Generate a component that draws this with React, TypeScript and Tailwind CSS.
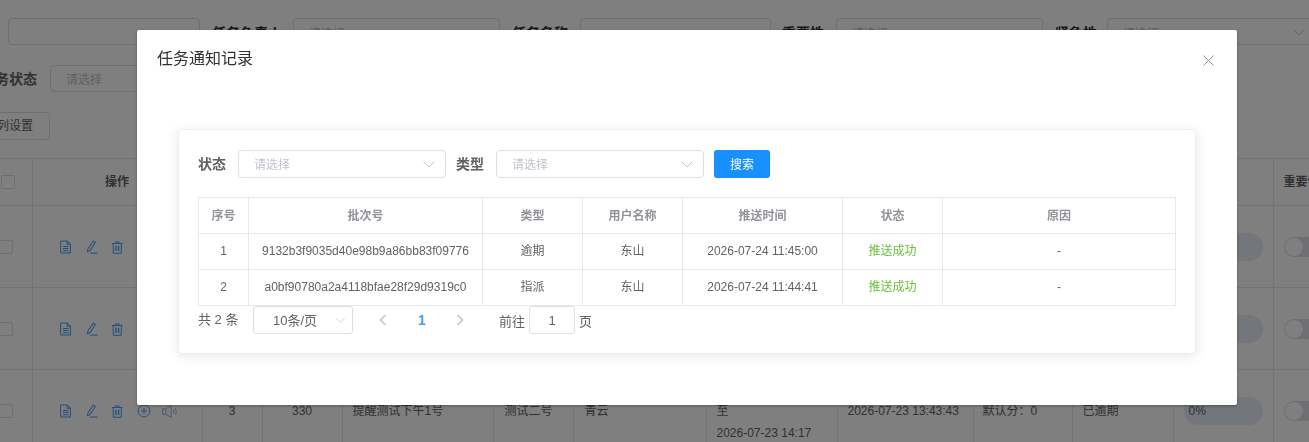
import React from "react";

const DocIcon = () => (
  <svg width="13.500" height="14" viewBox="0 0 14 15" fill="none" stroke="currentColor" strokeWidth="1.100">
    <path d="M2.500 1h6l3.500 3.500V14H2.500a1 1 0 0 1-1-1V2a1 1 0 0 1 1-1z" />
    <path d="M8.500 1v3.500H12M4 7h6M4 9.200h6M4 11.400h6" />
  </svg>
);
const EditIcon = () => (
  <svg width="15" height="14" viewBox="0 0 14 15" fill="none" stroke="currentColor" strokeWidth="1.100">
    <path d="M8.800 1.200l2.300 1.500-5.600 8.600-2.800 1.200.4-3z" />
    <path d="M5.500 14h8" />
  </svg>
);
const TrashIcon = () => (
  <svg width="12.500" height="15" viewBox="0 0 14 15" fill="none" stroke="currentColor" strokeWidth="1.100">
    <path d="M1 3h12M5 3V1.200h4V3M2.500 3v11h9V3" />
    <path d="M5.500 5.500v6M8.500 5.500v6" strokeWidth="1.500" />
  </svg>
);
const PlusIcon = () => (
  <svg width="14" height="14" viewBox="0 0 14 14" fill="none" stroke="currentColor" strokeWidth="1">
    <circle cx="7" cy="7" r="6" />
    <path d="M7 4v6M4 7h6" />
  </svg>
);
const SpeakerIcon = () => (
  <svg width="17" height="15" viewBox="0 0 15 14" fill="none" stroke="currentColor" strokeWidth="0.900">
    <path d="M1 4.500h3V9.500H1zM4 4.500L9 1.500v11L4 9.500" />
    <path d="M11 5c.6 1.200.6 2.800 0 4M13 4c.9 1.900.9 4.100 0 6" />
  </svg>
);
const Chevron = ({ className = "" }: { className?: string }) => (
  <svg className={className} width="12" height="7" viewBox="0 0 12 7" fill="none" stroke="currentColor" strokeWidth="1">
    <path d="M0.500 0.500L6 6l5.500-5.500" />
  </svg>
);

const colWidths = [32, 170, 60, 80, 151, 80, 133, 131, 136, 99, 101, 100, 100];

const IconSlot = ({ children }: { children: React.ReactNode }) => (
  <span className="w-[26px] flex justify-center shrink-0">{children}</span>
);

const Actions = () => (
  <div className="flex items-center pl-[20px] pt-[1px] text-[#409eff]">
    <IconSlot><DocIcon /></IconSlot>
    <IconSlot><EditIcon /></IconSlot>
    <IconSlot><TrashIcon /></IconSlot>
    <IconSlot><PlusIcon /></IconSlot>
    <IconSlot><span className="text-[#8fb4e0]"><SpeakerIcon /></span></IconSlot>
  </div>
);

const BgRow = ({ n, full }: { n: number; full: boolean }) => (
  <tr className="h-[82px] border-b border-[#e4e7ed]">
    <td className="border-r border-[#e4e7ed]">
      <div className="w-[14px] h-[14px] border border-[#dcdfe6] rounded-[2px] -ml-px" />
    </td>
    <td className="border-r border-[#e4e7ed]"><Actions /></td>
    <td className="border-r border-[#e4e7ed] text-center">{full ? n : ""}</td>
    <td className="border-r border-[#e4e7ed] text-center">{full ? "330" : ""}</td>
    <td className="border-r border-[#e4e7ed] pl-[10px]">{full ? "提醒测试下午1号" : ""}</td>
    <td className="border-r border-[#e4e7ed] pl-[11px]">{full ? "测试二号" : ""}</td>
    <td className="border-r border-[#e4e7ed] pl-[11px]">{full ? "青云" : ""}</td>
    <td className="border-r border-[#e4e7ed] pl-[10px] leading-[22px]">
      {full && (
        <>
          <div>2026-07-23 14:00</div>
          <div>至</div>
          <div>2026-07-23 14:17</div>
        </>
      )}
    </td>
    <td className="border-r border-[#e4e7ed] pl-[10px]">{full ? "2026-07-23 13:43:43" : ""}</td>
    <td className="border-r border-[#e4e7ed] pl-[9px]">{full ? "默认分：0" : ""}</td>
    <td className="border-r border-[#e4e7ed] pl-[10px]">{full ? "已逾期" : ""}</td>
    <td className="border-r border-[#e4e7ed] pl-[10px]">
      <div className="w-[79px] h-[28px] rounded-full bg-[#e6ecf4] flex items-center pl-[5px]">{full ? "0%" : ""}</div>
    </td>
    <td className="pl-[10px]">
      <div className="w-[46px] h-[20px] rounded-full bg-[#dcdfe6] p-px">
        <div className="w-[18px] h-[18px] rounded-full bg-white" />
      </div>
    </td>
  </tr>
);

const Field = ({ label, left, width, placeholder = "请选择" }: { label: string; left: number; width: number; placeholder?: string }) => (
  <div className="flex items-center shrink-0" style={{ width: left + width }}>
    <span className="font-bold text-[14px] text-[#303133] whitespace-nowrap pt-[4px]" style={{ width: left }}>{label}</span>
    <div className="h-[27px] border border-[#dcdfe6] rounded-[4px] pl-[15px] pt-[4px] flex items-center text-[12px] text-[#c0c4cc]" style={{ width }}>
      {placeholder}
    </div>
  </div>
);

const Select = () => (
  <div className="h-[28px] w-[208px] border border-[#dcdfe6] rounded-[4px] pl-[15px] pr-[10px] flex items-center justify-between text-[12px] text-[#c0c4cc]">
    <span className="pt-[1px]">请选择</span>
    <Chevron className="text-[#c0c4cc]" />
  </div>
);

const headers = ["序号", "批次号", "类型", "用户名称", "推送时间", "状态", "原因"];
const widths = [50, 234, 100, 100, 160, 100, 233];
const rows = [
  ["1", "9132b3f9035d40e98b9a86bb83f09776", "逾期", "东山", "2026-07-24 11:45:00", "推送成功", "-"],
  ["2", "a0bf90780a2a4118bfae28f29d9319c0", "指派", "东山", "2026-07-24 11:44:41", "推送成功", "-"],
];

export default function App() {
  return (
    <div className="relative w-[1309px] h-[442px] overflow-hidden bg-white text-[12px] text-[#606266] font-['Liberation_Sans','Noto_Sans_CJK_SC',sans-serif]">
      <div className="pt-[18px]">
        <div className="flex items-center pl-[8px] h-[27px]">
          <div className="w-[192px] h-[27px] border border-[#dcdfe6] rounded-[4px] shrink-0" />
          <div className="ml-[12px]"><Field label="任务负责人" left={81} width={207} /></div>
          <div className="ml-[12px]"><Field label="任务名称" left={68} width={191} placeholder="" /></div>
          <div className="ml-[11px]"><Field label="重要性" left={54} width={207} /></div>
          <div className="ml-[12px] relative"><Field label="紧急性" left={52} width={230} />
            <Chevron className="absolute right-[32px] top-[11px] text-[#c0c4cc]" />
          </div>
        </div>
        <div className="flex items-center mt-[20px] h-[27px] -ml-[19px]">
          <span className="font-bold text-[14px] text-[#606266] w-[69px] shrink-0 pt-[2px]">任务状态</span>
          <div className="w-[192px] h-[27px] border border-[#dcdfe6] rounded-[4px] pl-[15px] pt-[2px] flex items-center text-[#c0c4cc]">请选择</div>
        </div>
        <div className="mt-[20px] -ml-[20px] w-[70px] h-[28px] border border-[#dcdfe6] rounded-[4px] flex items-center justify-end pr-[16px] text-[#606266]">列设置</div>
        <table className="mt-[18px] table-fixed border-collapse w-[1373px]">
          <colgroup>
            {colWidths.map((w, i) => <col key={i} style={{ width: w }} />)}
          </colgroup>
          <thead>
            <tr className="h-[47px] border-y border-[#e4e7ed] font-bold text-[#606266]">
              <th className="border-r border-[#e4e7ed]">
                <div className="w-[14px] h-[14px] ml-[1px] border border-[#dcdfe6] rounded-[2px]" />
              </th>
              <th className="border-r border-[#e4e7ed]">操作</th>
              <th className="border-r border-[#e4e7ed]" />
              <th className="border-r border-[#e4e7ed]" />
              <th className="border-r border-[#e4e7ed]" />
              <th className="border-r border-[#e4e7ed]" />
              <th className="border-r border-[#e4e7ed]" />
              <th className="border-r border-[#e4e7ed]" />
              <th className="border-r border-[#e4e7ed]" />
              <th className="border-r border-[#e4e7ed]" />
              <th className="border-r border-[#e4e7ed]" />
              <th className="border-r border-[#e4e7ed]" />
              <th className="text-left pl-[10px] whitespace-nowrap">重要性</th>
            </tr>
          </thead>
          <tbody>
            <BgRow n={1} full={false} />
            <BgRow n={2} full={false} />
            <BgRow n={3} full />
          </tbody>
        </table>
      </div>

      <div className="fixed inset-0 bg-black/50" />

      <div className="fixed left-[137px] top-[30px] w-[1100px] h-[375px] bg-white rounded-[2px] shadow-[0_1px_3px_rgba(0,0,0,0.3)]">
        <div className="flex items-start justify-between pl-[20px] pr-[23px] pt-[17px] h-[60px]">
          <span className="text-[16px] leading-[24px] text-[#303133]">任务通知记录</span>
          <svg className="mt-[8px]" width="11" height="11" viewBox="0 0 11 11" stroke="#909399" strokeWidth="1" fill="none">
            <path d="M0.500 0.500l10 10M10.500 0.500l-10 10" />
          </svg>
        </div>
        <div className="mt-[39px] ml-[41px] w-[1018px] h-[225px] bg-white rounded-[4px] border border-[#ebeef5] shadow-[0_2px_12px_rgba(0,0,0,0.1)] pt-[20px] pl-[19px]">
          <div className="flex items-center h-[28px]">
            <span className="text-[14px] font-bold w-[40px] shrink-0">状态</span>
            <Select />
            <span className="text-[14px] font-bold ml-[10px] w-[40px] shrink-0">类型</span>
            <Select />
            <button className="ml-[10px] w-[56px] h-[28px] pt-[2px] rounded-[3px] bg-[#1890ff] text-white text-[12px]">搜索</button>
          </div>
          <table className="mt-[19px] table-fixed border-collapse w-[977px] text-center">
            <colgroup>
              {widths.map((w, i) => <col key={i} style={{ width: w }} />)}
            </colgroup>
            <thead>
              <tr className="h-[36px]">
                {headers.map((h) => (
                  <th key={h} className="border border-[#e6e9ef] font-bold text-[#909399]">{h}</th>
                ))}
              </tr>
            </thead>
            <tbody>
              {rows.map((r) => (
                <tr key={r[0]} className="h-[36px]">
                  {r.map((c, i) => (
                    <td key={i} className={`border border-[#e6e9ef] pb-[2px] ${i === 5 ? "text-[#67c23a]" : ""}`}>{c}</td>
                  ))}
                </tr>
              ))}
            </tbody>
          </table>
          <div className="flex items-center h-[28px] text-[13px]">
            <span className="w-[55px] shrink-0">共 2 条</span>
            <div className="w-[100px] h-[28px] border border-[#dcdfe6] rounded-[3px] flex items-center pl-[19px] pr-[7px] justify-between shrink-0">
              <span className="pt-[1px]">10条/页</span>
              <Chevron className="w-[9px] text-[#c0c4cc]" />
            </div>
            <svg className="ml-[26px] shrink-0" width="8" height="12" viewBox="0 0 8 12" fill="none" stroke="#c0c4cc" strokeWidth="1.500">
              <path d="M6.500 1L1.500 6l5 5" />
            </svg>
            <span className="ml-[31px] w-[8px] text-[14px] font-bold text-[#409eff]">1</span>
            <svg className="ml-[30px] shrink-0" width="8" height="12" viewBox="0 0 8 12" fill="none" stroke="#c0c4cc" strokeWidth="1.500">
              <path d="M1.500 1l5 5-5 5" />
            </svg>
            <span className="ml-[35px] w-[30px] shrink-0 pt-[3px]">前往</span>
            <div className="w-[46px] h-[28px] border border-[#dcdfe6] rounded-[3px] flex items-center justify-center shrink-0 pt-[1px]">1</div>
            <span className="ml-[4px] pt-[3px]">页</span>
          </div>
        </div>
      </div>
    </div>
  );
}
